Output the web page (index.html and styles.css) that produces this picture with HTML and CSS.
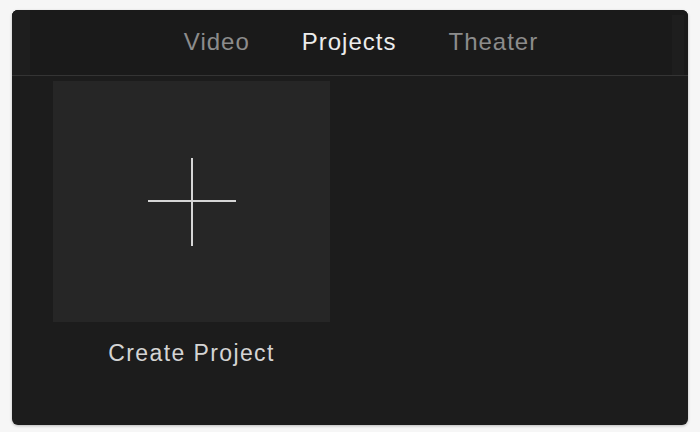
FILE: index.html
```html
<!DOCTYPE html>
<html>
<head>
<meta charset="utf-8">
<link rel="stylesheet" href="styles.css">
</head>
<body>
<div class="window">
  <header class="toolbar">
    <div class="edge edge-left"></div>
    <nav class="tabs">
      <span class="tab">Video</span>
      <span class="tab active">Projects</span>
      <span class="tab">Theater</span>
    </nav>
    <div class="edge edge-right"></div>
  </header>
  <main class="content">
    <div class="project">
      <div class="tile">
        <svg class="plus" width="88" height="88" viewBox="0 0 88 88">
          <line x1="44" y1="0" x2="44" y2="88" stroke="#d6d6d6" stroke-width="2"/>
          <line x1="0" y1="43" x2="88" y2="43" stroke="#d6d6d6" stroke-width="2"/>
        </svg>
      </div>
      <div class="label">Create Project</div>
    </div>
  </main>
</div>
</body>
</html>
```
FILE: styles.css
```css
html, body {
  margin: 0;
  padding: 0;
}
body {
  background: #f6f6f6;
  width: 700px;
  height: 432px;
  overflow: hidden;
  font-family: "Liberation Sans", Arial, sans-serif;
}
.window {
  margin: 10px 0 0 12px;
  width: 676px;
  height: 415px;
  background: #1c1c1c;
  border-radius: 6px;
  overflow: hidden;
  box-shadow: 0 1px 3px rgba(0,0,0,0.25);
  display: flex;
  flex-direction: column;
}
.toolbar {
  height: 65px;
  flex: none;
  background: #1a1a1a;
  border-bottom: 1px solid #343434;
  display: flex;
  align-items: stretch;
}
.edge {
  flex: none;
}
.edge-left {
  width: 18px;
  background: #1e1e1e;
}
.edge-right {
  width: 12px;
  margin: 5px 4px 0 0;
  background: #1e1e1e;
}
.tabs {
  flex: 1;
  display: flex;
  justify-content: center;
  align-items: center;
  gap: 52px;
  padding-left: 20px;
  padding-bottom: 2px;
}
.tab {
  font-size: 24px;
  letter-spacing: 1px;
  color: #8c8c8c;
}
.tab.active {
  color: #ececec;
}
.content {
  flex: 1;
  padding: 5px 0 0 41px;
}
.project {
  width: 277px;
  display: flex;
  flex-direction: column;
  align-items: center;
}
.tile {
  width: 277px;
  height: 241px;
  background: #262626;
  display: flex;
  align-items: center;
  justify-content: center;
}
.plus {
  display: block;
}
.label {
  margin-top: 18px;
  font-size: 23px;
  letter-spacing: 1.4px;
  color: #d4d4d4;
}
```
